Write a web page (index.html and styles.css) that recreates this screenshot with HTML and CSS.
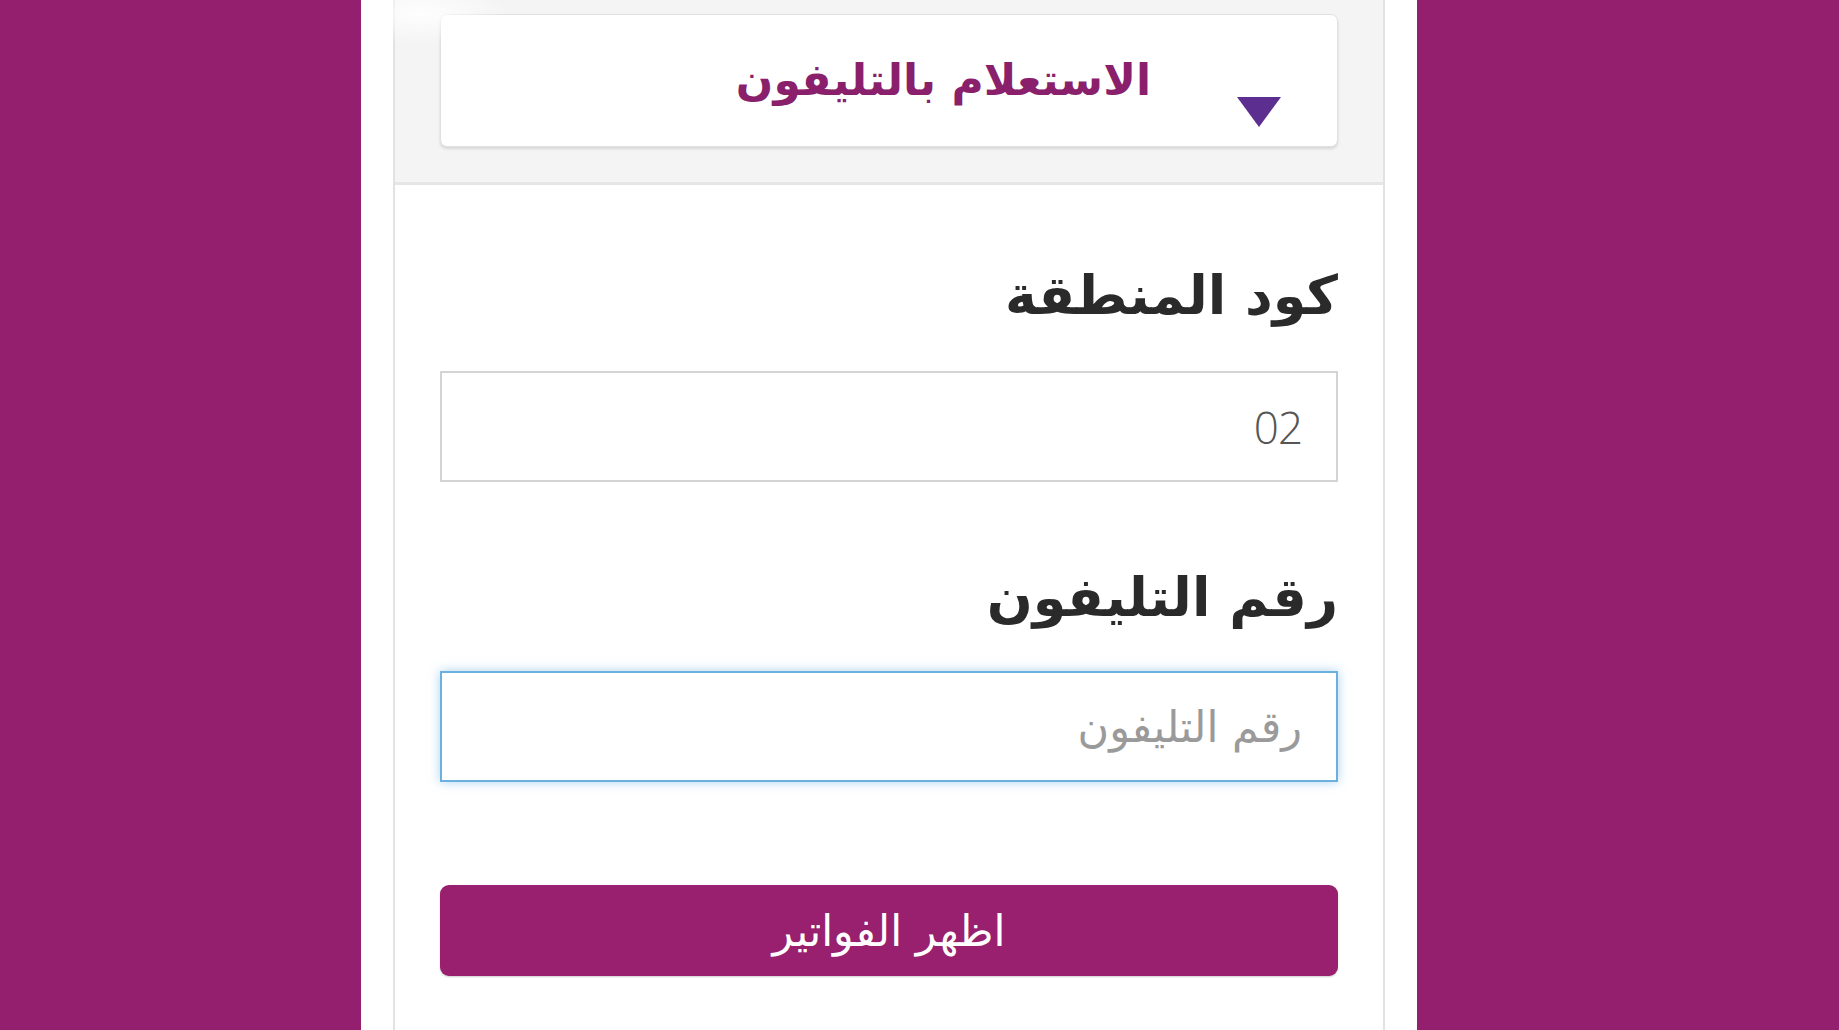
FILE: index.html
```html
<!DOCTYPE html>
<html lang="ar" dir="rtl">
<head>
<meta charset="utf-8">
<title>الاستعلام بالتليفون</title>
<link rel="stylesheet" href="styles.css">
</head>
<body>
<div class="panel">
  <div class="card">
    <div class="card-head">
      <div class="select">
        <span class="arrow"></span>
        <span class="select-text">الاستعلام بالتليفون</span>
      </div>
    </div>
    <div class="card-body">
      <label class="label first">كود المنطقة</label>
      <div class="input"><span class="value">02</span></div>
      <label class="label second">رقم التليفون</label>
      <div class="input focus"><span class="placeholder">رقم التليفون</span></div>
      <button class="btn">اظهر الفواتير</button>
    </div>
  </div>
  <div class="blur"></div>
</div>
</body>
</html>
```
FILE: styles.css
```css
html, body {
  margin: 0;
  padding: 0;
  height: 100%;
  overflow: hidden;
}
body {
  background: #951f6f;
  font-family: "DejaVu Sans", "Noto Sans", sans-serif;
  direction: ltr;
}
* { box-sizing: border-box; }
.panel {
  position: relative;
  width: 1056px;
  margin-left: 361px;
  height: 100vh;
  background: #ffffff;
  display: flex;
  justify-content: center;
}
.card {
  width: 992px;
  border-left: 2px solid #e2e2e2;
  border-right: 2px solid #e2e2e2;
  display: flex;
  flex-direction: column;
  direction: rtl;
}
.card-head {
  background: #f4f4f4;
  padding: 14px 45px 35px;
  border-bottom: 3px solid #e6e6e6;
}
.select {
  height: 133px;
  background: #fff;
  border: 1px solid #e0e0e0;
  border-radius: 7px;
  box-shadow: 0 2px 3px rgba(0,0,0,0.12);
  display: flex;
  align-items: flex-start;
  gap: 86px;
  padding-right: 56px;
}
.arrow {
  width: 0;
  height: 0;
  border-left: 22px solid transparent;
  border-right: 22px solid transparent;
  border-top: 30px solid #5c2e90;
  margin-top: 82px;
}
.select-text {
  color: #8a1f6b;
  font-size: 44px;
  font-weight: bold;
  line-height: 54px;
  margin-top: 38px;
}
.card-body {
  padding: 0 45px;
  display: flex;
  flex-direction: column;
}
.label {
  display: block;
  height: 70px;
  line-height: 70px;
  font-size: 54px;
  font-weight: bold;
  color: #2a2a2a;
}
.label.first { margin-top: 76px; }
.label.second { margin-top: 81px; }
.input {
  height: 111px;
  border: 2px solid #d4d4d4;
  background: #fff;
  margin-top: 40px;
  display: flex;
  align-items: center;
  padding-right: 34px;
  font-size: 44px;
  color: #555;
}
.input.focus {
  margin-top: 38px;
  border-color: #6cb0e0;
  box-shadow: 0 0 10px rgba(102, 175, 233, 0.55);
}
.value {
  font-family: "Open Sans", "DejaVu Sans", sans-serif;
  font-weight: 300;
  font-size: 44px;
  color: #555;
  letter-spacing: -1px;
}
.placeholder {
  color: #9a9a9a;
  font-size: 43px;
}
.btn {
  margin-top: 103px;
  height: 91px;
  border: none;
  border-radius: 9px;
  background: #991f6f;
  color: #fff;
  font-family: "DejaVu Sans", sans-serif;
  font-size: 43px;
  box-shadow: 0 1px 2px rgba(0,0,0,0.2);
}
.blur {
  position: absolute;
  left: 0;
  top: 0;
  width: 150px;
  height: 45px;
  background: radial-gradient(ellipse at 40% 30%, rgba(255,255,255,0.9), rgba(255,255,255,0) 70%);
}
```
